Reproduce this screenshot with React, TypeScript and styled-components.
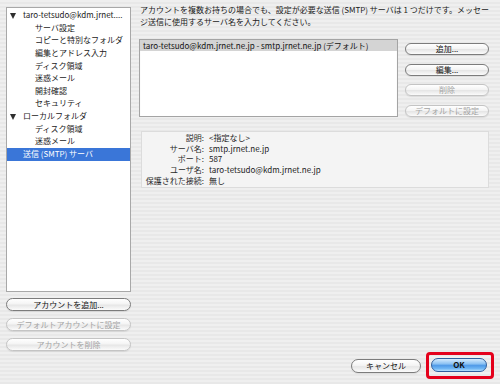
import styled, { createGlobalStyle, css } from "styled-components";

const GlobalStyle = createGlobalStyle`
  html, body {
    margin: 0;
    padding: 0;
  }
  body {
    width: 500px;
    height: 384px;
    overflow: hidden;
    font-family: "Noto Sans CJK JP", "DejaVu Sans", sans-serif;
    font-size: 8px;
    color: #111;
    background: repeating-linear-gradient(
      to bottom,
      #efefef 0px,
      #efefef 2px,
      #e8e8e8 2px,
      #e8e8e8 4px
    );
  }
`;

const tree = [
  { label: "taro-tetsudo@kdm.jrnet....", level: 0, open: true },
  { label: "サーバ設定", level: 1 },
  { label: "コピーと特別なフォルダ", level: 1 },
  { label: "編集とアドレス入力", level: 1 },
  { label: "ディスク領域", level: 1 },
  { label: "迷惑メール", level: 1 },
  { label: "開封確認", level: 1 },
  { label: "セキュリティ", level: 1 },
  { label: "ローカルフォルダ", level: 0, open: true },
  { label: "ディスク領域", level: 1 },
  { label: "迷惑メール", level: 1 },
  { label: "送信 (SMTP) サーバ", level: 0, selected: true },
];

const info = [
  ["説明:", "<指定なし>"],
  ["サーバ名:", "smtp.jrnet.ne.jp"],
  ["ポート:", "587"],
  ["ユーザ名:", "taro-tetsudo@kdm.jrnet.ne.jp"],
  ["保護された接続:", "無し"],
];

export default function App() {
  return (
    <>
      <GlobalStyle />
      <Window>
        <Body>
          <LeftColumn>
            <Tree>
              {tree.map((item, i) => (
                <TreeRow key={i} $level={item.level} $selected={!!item.selected}>
                  {item.open && <Disclosure />}
                  <span>{item.label}</span>
                </TreeRow>
              ))}
            </Tree>
            <PillButton>アカウントを追加...</PillButton>
            <PillButton $disabled>デフォルトアカウントに設定</PillButton>
            <PillButton $disabled>アカウントを削除</PillButton>
          </LeftColumn>

          <Main>
            <Description>
              アカウントを複数お持ちの場合でも、設定が必要な送信 (SMTP) サーバは 1 つだけです。メッセー
              <br />
              ジ送信に使用するサーバ名を入力してください。
            </Description>

            <ListArea>
              <ServerList>
                <ServerItem $selected>
                  taro-tetsudo@kdm.jrnet.ne.jp - smtp.jrnet.ne.jp (デフォルト)
                </ServerItem>
              </ServerList>
              <ButtonStack>
                <PillButton>追加...</PillButton>
                <PillButton>編集...</PillButton>
                <PillButton $disabled>削除</PillButton>
                <PillButton $disabled>デフォルトに設定</PillButton>
              </ButtonStack>
            </ListArea>

            <InfoPanel>
              {info.map(([k, v]) => (
                <InfoRow key={k}>
                  <InfoLabel>{k}</InfoLabel>
                  <InfoValue>{v}</InfoValue>
                </InfoRow>
              ))}
            </InfoPanel>
          </Main>
        </Body>

        <Footer>
          <PillButton $width={70}>キャンセル</PillButton>
          <Highlight>
            <DefaultButton>OK</DefaultButton>
          </Highlight>
        </Footer>
      </Window>
    </>
  );
}

const Window = styled.div`
  box-sizing: border-box;
  width: 500px;
  height: 384px;
  padding: 4px 6px 5px 6px;
  display: flex;
  flex-direction: column;
`;

const Body = styled.div`
  flex: 1;
  display: flex;
  min-height: 0;
`;

const LeftColumn = styled.div`
  width: 125px;
  margin-top: 3px;
  padding-bottom: 1px;
  display: flex;
  flex-direction: column;

  & > button {
    margin-top: 7px;
  }
  & > button:first-of-type {
    margin-top: 6px;
  }
`;

const Tree = styled.div`
  flex: 1;
  background: #fff;
  border: 1px solid #a8a8a8;
  padding-top: 1px;
  overflow: hidden;
`;

const TreeRow = styled.div<{ $level: number; $selected: boolean }>`
  position: relative;
  height: 12.64px;
  line-height: 12.64px;
  padding-left: ${(p) => (p.$level === 0 ? 16 : 28)}px;
  white-space: nowrap;
  overflow: hidden;
  color: #1a1a1a;
  ${(p) =>
    p.$selected &&
    css`
      background: #3a76d8;
      color: #fff;
    `}
`;

const Disclosure = styled.i`
  position: absolute;
  left: 3px;
  top: 4px;
  width: 0;
  height: 0;
  border-left: 3.5px solid transparent;
  border-right: 3.5px solid transparent;
  border-top: 6px solid #2e2e2e;
`;

const PillButton = styled.button<{ $disabled?: boolean; $width?: number }>`
  box-sizing: border-box;
  display: block;
  width: ${(p) => (p.$width ? `${p.$width}px` : "100%")};
  height: 13px;
  padding: 0;
  margin: 0;
  font-family: inherit;
  font-size: 8px;
  line-height: 11px;
  text-align: center;
  border-radius: 7px;
  border: 1px solid ${(p) => (p.$disabled ? "#c4c4c4" : "#7c7c7c")};
  color: ${(p) => (p.$disabled ? "#a4a4a4" : "#111")};
  background: linear-gradient(
    to bottom,
    #ffffff 0%,
    #f4f4f4 45%,
    #e6e6e6 55%,
    #fbfbfb 100%
  );
  box-shadow: 0 1px 1px rgba(0, 0, 0, 0.08);
`;

const Main = styled.div`
  flex: 1;
  margin-left: 8px;
  margin-right: 5px;
  display: flex;
  flex-direction: column;
`;

const Description = styled.div`
  padding-left: 1px;
  line-height: 12px;
  white-space: nowrap;
  color: #1a1a1a;
`;

const ListArea = styled.div`
  display: flex;
  gap: 7px;
  margin-top: 11px;
`;

const ServerList = styled.div`
  flex: 1;
  height: 78px;
  box-sizing: border-box;
  background: #fff;
  border: 1px solid #a4a4a4;
  box-shadow: inset 0 1px 1px rgba(0, 0, 0, 0.12);
`;

const ServerItem = styled.div<{ $selected?: boolean }>`
  height: 11px;
  line-height: 11px;
  padding-left: 3px;
  white-space: nowrap;
  background: ${(p) => (p.$selected ? "#d4d4d4" : "transparent")};
`;

const ButtonStack = styled.div`
  width: 84px;
  padding-top: 4px;
  display: flex;
  flex-direction: column;
  gap: 8.5px;

  & > button {
    height: 12px;
    line-height: 10px;
  }
`;

const InfoPanel = styled.div`
  margin-top: 14px;
  margin-left: 2px;
  height: 57px;
  box-sizing: border-box;
  padding-top: 1px;
  background: #f4f4f4;
  border: 1px solid #dcdcdc;
  display: flex;
  flex-direction: column;
`;

const InfoRow = styled.div`
  display: grid;
  grid-template-columns: 62px 1fr;
  column-gap: 5px;
  height: 10.7px;
  line-height: 10.7px;
`;

const InfoLabel = styled.span`
  text-align: right;
  white-space: nowrap;
  color: #2a2a2a;
`;

const InfoValue = styled.span`
  white-space: nowrap;
  color: #1a1a1a;
`;

const Footer = styled.div`
  display: flex;
  justify-content: flex-end;
  align-items: center;
  gap: 5px;
  height: 27px;

  & > button {
    height: 14px;
    line-height: 12px;
  }
`;

const Highlight = styled.div`
  box-sizing: border-box;
  width: 68px;
  height: 27px;
  border: 3px solid #e4001b;
  border-radius: 4px;
  padding: 3px 4px 4px 2px;
`;

const DefaultButton = styled.button`
  box-sizing: border-box;
  display: block;
  width: 56px;
  height: 14px;
  margin: 0;
  padding: 0;
  font-family: inherit;
  font-size: 8px;
  font-weight: bold;
  line-height: 12px;
  color: #111;
  border-radius: 7px;
  border: 1px solid #2f5f9e;
  background: linear-gradient(
    to bottom,
    #d6ebfd 0%,
    #8cc2f3 40%,
    #4f9ae8 55%,
    #70b6f4 80%,
    #b4e0fd 100%
  );
`;
